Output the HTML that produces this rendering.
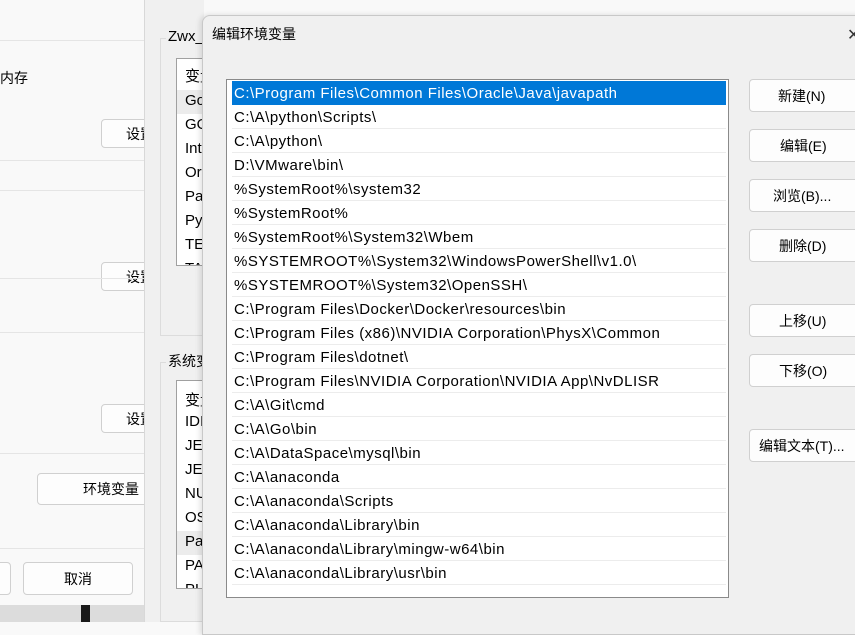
<!DOCTYPE html>
<html><head><meta charset="utf-8"><style>
*{margin:0;padding:0;box-sizing:border-box}
body{width:855px;height:622px;overflow:hidden;position:relative;background:#f9f9f9;font-family:"Liberation Sans","Noto Sans CJK SC",sans-serif;color:#000}
.a{position:absolute}
.btn{position:absolute;background:#fdfdfd;border:1px solid #d0d0d0;border-radius:4px;font-size:14px;display:flex;align-items:center;justify-content:center}
.hl{position:absolute;height:1px;background:#e5e5e5}
.row{position:absolute;left:5px;right:2px;height:24px;line-height:25px;font-size:15px;letter-spacing:.5px;padding-left:2px;border-bottom:1px solid #ececec;white-space:nowrap}
.sm{position:absolute;font-size:15px;left:8px}
</style></head><body>
<div class="hl" style="left:0;top:40px;width:145px"></div>
<div class="a" style="left:0;top:68px;font-size:14px">内存</div>
<div class="btn" style="left:101px;top:119px;width:60px;height:29px;justify-content:flex-start;padding-left:24px">设置</div>
<div class="hl" style="left:0;top:160px;width:145px"></div>
<div class="hl" style="left:0;top:190px;width:145px"></div>
<div class="btn" style="left:101px;top:262px;width:60px;height:29px;justify-content:flex-start;padding-left:24px">设置</div>
<div class="hl" style="left:0;top:278px;width:145px"></div>
<div class="hl" style="left:0;top:332px;width:145px"></div>
<div class="btn" style="left:101px;top:404px;width:60px;height:29px;justify-content:flex-start;padding-left:24px">设置</div>
<div class="hl" style="left:0;top:453px;width:145px"></div>
<div class="btn" style="left:37px;top:473px;width:120px;height:32px;justify-content:flex-start;padding-left:45px">环境变量</div>
<div class="hl" style="left:0;top:548px;width:145px"></div>
<div class="btn" style="left:-20px;top:562px;width:31px;height:33px"></div>
<div class="btn" style="left:23px;top:562px;width:110px;height:33px">取消</div>
<div class="a" style="left:0;top:605px;width:145px;height:17px;background:#dcdcdc"></div>
<div class="a" style="left:81px;top:605px;width:9px;height:17px;background:#1a1a1a"></div>
<div class="a" style="left:144px;top:0;width:60px;height:622px;background:#f0f0f0;border-left:1px solid #d8d8d8"></div>
<div class="a" style="left:160px;top:38px;width:60px;height:298px;border:1px solid #dcdcdc"></div>
<div class="a" style="left:166px;top:28px;font-size:15px;background:#f0f0f0;padding:0 2px">Zwx_</div>
<div class="a" style="left:176px;top:58px;width:40px;height:208px;background:#fff;border:1px solid #a0a0a0;overflow:hidden">
<div class="sm" style="top:6px">变量</div><div class="a" style="left:0;top:31px;width:40px;height:24px;background:#ececec"></div>
<div class="sm" style="top:33px">Go</div><div class="sm" style="top:57px">GO</div><div class="sm" style="top:81px">Int</div><div class="sm" style="top:105px">Or</div><div class="sm" style="top:129px">Pa</div><div class="sm" style="top:153px">Py</div><div class="sm" style="top:177px">TE</div><div class="sm" style="top:201px">TA</div>
</div>
<div class="a" style="left:160px;top:362px;width:60px;height:260px;border:1px solid #dcdcdc"></div>
<div class="a" style="left:166px;top:351px;font-size:14px;background:#f0f0f0;padding:0 2px">系统变量</div>
<div class="a" style="left:176px;top:380px;width:40px;height:209px;background:#fff;border:1px solid #a0a0a0;overflow:hidden">
<div class="sm" style="top:8px">变量</div>
<div class="sm" style="top:32px">IDI</div><div class="sm" style="top:56px">JET</div><div class="sm" style="top:80px">JET</div><div class="sm" style="top:104px">NU</div><div class="sm" style="top:128px">OS</div>
<div class="a" style="left:0;top:150px;width:40px;height:24px;background:#ececec"></div>
<div class="sm" style="top:152px">Pa</div><div class="sm" style="top:176px">PA</div><div class="sm" style="top:200px">PL</div>
</div>
<div class="a" style="left:202px;top:15px;width:700px;height:620px;background:#f0f0f0;border:1px solid #c8c8c8;border-radius:8px 0 0 0;box-shadow:-2px 0 6px rgba(0,0,0,.12)"></div>
<div class="a" style="left:212px;top:24px;font-size:14px">编辑环境变量</div>
<div class="a" style="left:847px;top:25px;font-size:16px;color:#333">✕</div>
<div class="a" style="left:226px;top:79px;width:503px;height:519px;background:#fff;border:1px solid #8a8a8a">
<div class="row" style="top:1px;background:#0078d7;color:#fff;border-bottom-color:#0078d7">C:\Program Files\Common Files\Oracle\Java\javapath</div>
<div class="row" style="top:25px">C:\A\python\Scripts\</div>
<div class="row" style="top:49px">C:\A\python\</div>
<div class="row" style="top:73px">D:\VMware\bin\</div>
<div class="row" style="top:97px">%SystemRoot%\system32</div>
<div class="row" style="top:121px">%SystemRoot%</div>
<div class="row" style="top:145px">%SystemRoot%\System32\Wbem</div>
<div class="row" style="top:169px">%SYSTEMROOT%\System32\WindowsPowerShell\v1.0\</div>
<div class="row" style="top:193px">%SYSTEMROOT%\System32\OpenSSH\</div>
<div class="row" style="top:217px">C:\Program Files\Docker\Docker\resources\bin</div>
<div class="row" style="top:241px">C:\Program Files (x86)\NVIDIA Corporation\PhysX\Common</div>
<div class="row" style="top:265px">C:\Program Files\dotnet\</div>
<div class="row" style="top:289px">C:\Program Files\NVIDIA Corporation\NVIDIA App\NvDLISR</div>
<div class="row" style="top:313px">C:\A\Git\cmd</div>
<div class="row" style="top:337px">C:\A\Go\bin</div>
<div class="row" style="top:361px">C:\A\DataSpace\mysql\bin</div>
<div class="row" style="top:385px">C:\A\anaconda</div>
<div class="row" style="top:409px">C:\A\anaconda\Scripts</div>
<div class="row" style="top:433px">C:\A\anaconda\Library\bin</div>
<div class="row" style="top:457px">C:\A\anaconda\Library\mingw-w64\bin</div>
<div class="row" style="top:481px">C:\A\anaconda\Library\usr\bin</div>
</div>
<div class="btn" style="left:749px;top:79px;width:115px;height:33px;justify-content:flex-start;padding-left:28px">新建(N)</div>
<div class="btn" style="left:749px;top:129px;width:115px;height:33px;justify-content:flex-start;padding-left:30px">编辑(E)</div>
<div class="btn" style="left:749px;top:179px;width:115px;height:33px;justify-content:flex-start;padding-left:23px">浏览(B)...</div>
<div class="btn" style="left:749px;top:229px;width:115px;height:33px;justify-content:flex-start;padding-left:29px">删除(D)</div>
<div class="btn" style="left:749px;top:304px;width:115px;height:33px;justify-content:flex-start;padding-left:29px">上移(U)</div>
<div class="btn" style="left:749px;top:354px;width:115px;height:33px;justify-content:flex-start;padding-left:29px">下移(O)</div>
<div class="btn" style="left:749px;top:429px;width:115px;height:33px;justify-content:flex-start;padding-left:9px">编辑文本(T)...</div>
</body></html>
